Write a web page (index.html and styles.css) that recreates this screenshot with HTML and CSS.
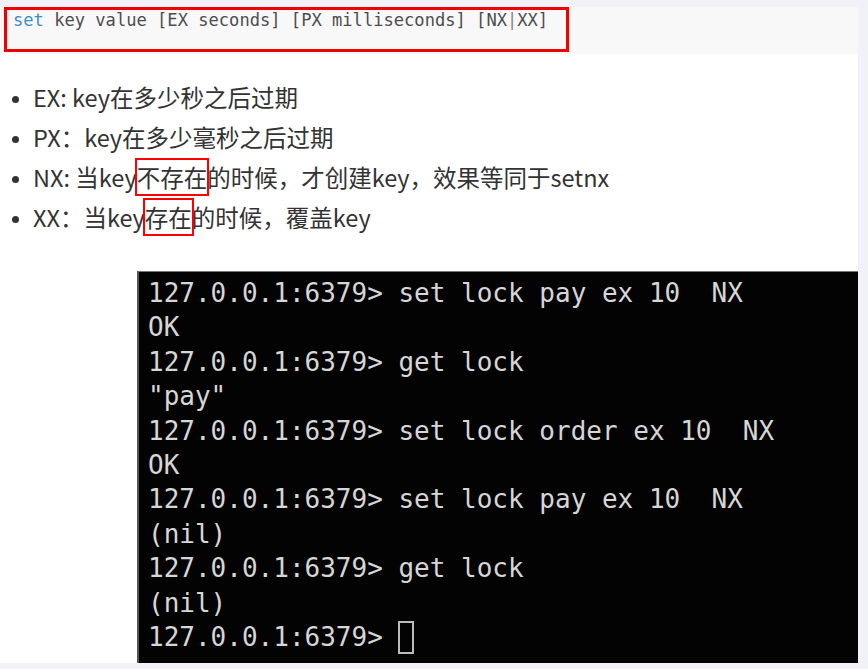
FILE: index.html
```html
<!DOCTYPE html>
<html lang="en">
<head>
    <meta charset="UTF-8">
    <title>redis set NX</title>
    <link rel="stylesheet" href="styles.css">
</head>
<body>
<div class="page">
    <div class="code">
        <div class="mark"><span class="kw">set</span> key value [EX seconds] [PX milliseconds] [NX<span class="bar">|</span>XX]</div>
    </div>
    <div class="content">
        <ul class="opts">
            <li>EX: key在多少秒之后过期</li>
            <li>PX：key在多少毫秒之后过期</li>
            <li>NX: 当key<span class="hl hl1">不存在</span>的时候，才创建key，效果等同于setnx</li>
            <li>XX：当key<span class="hl hl2">存在</span>的时候，覆盖key</li>
        </ul>
        <div class="term">
<pre>127.0.0.1:6379&gt; set lock pay ex 10  NX
OK
127.0.0.1:6379&gt; get lock
"pay"
127.0.0.1:6379&gt; set lock order ex 10  NX
OK
127.0.0.1:6379&gt; set lock pay ex 10  NX
(nil)
127.0.0.1:6379&gt; get lock
(nil)
127.0.0.1:6379&gt; <span class="cursor"></span></pre>
        </div>
    </div>
</div>
</body>
</html>
```

FILE: styles.css
```css
* { margin: 0; padding: 0; box-sizing: border-box; }
body { background: #f1f2f7; width: 868px; height: 669px; overflow: hidden; }
.page { width: 858px; padding-top: 7px; }

.code { background: #f8f8f8; height: 47px; padding-left: 4px; }
.mark { width: 565px; height: 45px; border: 3px solid #f20000; padding-left: 6px;
        font-family: "DejaVu Sans Mono", monospace; font-size: 17.1px; line-height: 20px; color: #4d4d4d; }
.mark .kw { color: #3b8fc4; }
.mark .bar { color: #888; }

.content { background: #fff; padding-top: 23px; height: 609px; }
.opts { padding-left: 33px; font-family: "Noto Sans CJK SC", sans-serif; font-size: 23.5px; line-height: 40px; color: #333; }
.opts li { list-style: disc; }
.opts li::marker { font-size: 18px; }
.hl { outline: 2px solid #f00; outline-offset: 0; }

.term { margin: 34px 0 0 137px; height: 392px; background: #030303; border-left: 2px solid #555; border-top: 1px solid #777;
        overflow: hidden; padding: 4px 0 0 9px; }
.term pre { font-family: "DejaVu Sans Mono", monospace; font-size: 26px; line-height: 34.4px; color: #d6d6d6; }
.cursor { display: inline-block; width: 16px; height: 33px; border: 2px solid #bbb; vertical-align: -8px; }
```
